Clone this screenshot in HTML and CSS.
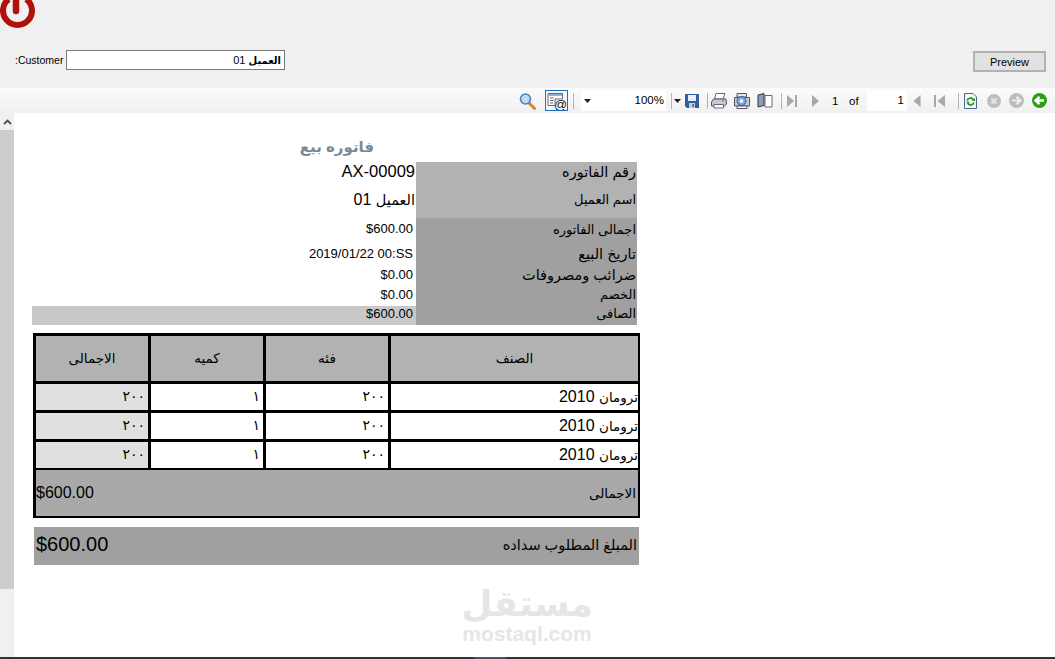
FILE: index.html
```html
<!DOCTYPE html>
<html lang="ar">
<head>
<meta charset="utf-8">
<title>فاتوره بيع</title>
<link rel="stylesheet" href="styles.css">
</head>
<body>
<div class="window">
  <header class="top-panel" dir="ltr">
    <svg class="power" width="36" height="30" viewBox="0 0 36 30"><path d="M8.700 -1 A14.500 14.500 0 1 0 26.300 -1" fill="none" stroke="#b3100a" stroke-width="6"/><path d="M16 -3 V11" stroke="#b3100a" stroke-width="6.500" stroke-linecap="round"/></svg>
    <div class="filter-row">
      <span class="customer-label">:Customer</span>
      <div class="customer-input" dir="rtl"><span class="input-ar">العميل</span> 01</div>
      <button class="preview-btn">Preview</button>
    </div>
  </header>

  <nav class="toolbar" dir="ltr">
    <svg class="t-zoom" width="17" height="18" viewBox="0 0 17 18"><path d="M10 11 L15.500 16.500" stroke="#c98a3a" stroke-width="3" stroke-linecap="round"/><circle cx="6.500" cy="7" r="5" fill="#bcd9f5" stroke="#4a80c0" stroke-width="1.600"/></svg>
    <span class="t-mail-btn"><svg width="21" height="19" viewBox="0 0 21 19"><path d="M2 2.500 H16.500 V8 H9 V14.500 H2 Z" fill="#fff" stroke="#667"/><path d="M2.500 3 H16 V5 H2.500 Z" fill="#8fb0d8"/><path d="M4 7 H7.500 M4 9.500 H7.500 M4 12 H7" stroke="#667"/><text class="at-sign" x="8" y="17.500">@</text></svg></span>
    <i class="sep t-sep1"></i>
    <span class="t-drop"><svg width="7" height="4" viewBox="0 0 7 4"><path d="M0 0 H7 L3.500 4 Z" fill="#222"/></svg></span>
    <span class="t-pct">100%</span>
    <i class="sep t-sep2"></i>
    <svg class="t-arrow" width="7" height="4" viewBox="0 0 7 4"><path d="M0 0 H7 L3.500 4 Z" fill="#222"/></svg>
    <svg class="t-save" width="14" height="14" viewBox="0 0 14 14"><path d="M0 0 H14 V14 H2 L0 12 Z" fill="#2f5f9f"/><path d="M3 1 H11 V7 H3 Z" fill="#e8eef6"/><path d="M4 9 H10 V14 H4 Z" fill="#c4ccd6"/><path d="M7.500 10 H9 V13 H7.500 Z" fill="#2f5f9f"/></svg>
    <i class="sep t-sep3"></i>
    <svg class="t-print" width="16" height="16" viewBox="0 0 16 16"><path d="M5 .5 H14 L12 6 H3.500 Z" fill="#fff" stroke="#667"/><path d="M2.500 6 H15 L15.500 11 L13.500 13 H.5 V9 Z" fill="#c3cbd4" stroke="#556"/><path d="M3 11.500 H12.500 V15 H3 Z" fill="#fff" stroke="#667"/><path d="M11 8 H13" stroke="#3a9a3a"/></svg>
    <svg class="t-setup" width="16" height="16" viewBox="0 0 16 16"><path d="M3 .5 H12.500 V4 H3 Z" fill="#dfe6ee" stroke="#556"/><path d="M.5 4.500 H15.500 V13 H.5 Z" fill="#c3cbd4" stroke="#556"/><circle cx="7.500" cy="8" r="4.500" fill="#7fa5d6" stroke="#2f5f9f"/><circle cx="7.500" cy="8" r="1.800" fill="#fff"/><path d="M3 13 H13 V15.500 H3 Z" fill="#fff" stroke="#556"/></svg>
    <svg class="t-layout" width="16" height="15" viewBox="0 0 16 15"><path d="M1 2 L7 .5 V12.500 L1 14 Z" fill="#8aa0b8" stroke="#334"/><path d="M8 2.500 H15 V14 H8 Z" fill="#fff" stroke="#667"/></svg>
    <i class="sep t-sep4"></i>
    <svg class="t-last" width="10" height="12" viewBox="0 0 10 12"><path d="M0 0 L7 6 L0 12 Z" fill="#a8a8a8"/><path d="M8 0 H10 V12 H8 Z" fill="#a8a8a8"/></svg>
    <svg class="t-next" width="9" height="12" viewBox="0 0 9 12"><path d="M1 0 L8 6 L1 12 Z" fill="#a8a8a8"/></svg>
    <span class="t-num">1</span>
    <span class="t-of">of</span>
    <span class="t-page">1</span>
    <svg class="t-prev" width="8" height="12" viewBox="0 0 8 12"><path d="M7.500 0 L.5 6 L7.500 12 Z" fill="#a8a8a8"/></svg>
    <svg class="t-first" width="11" height="12" viewBox="0 0 11 12"><path d="M0 0 H2 V12 H0 Z" fill="#a8a8a8"/><path d="M11 0 L3.500 6 L11 12 Z" fill="#a8a8a8"/></svg>
    <i class="sep t-sep5"></i>
    <svg class="t-refresh" width="13" height="16" viewBox="0 0 13 16"><path d="M.5 .5 H9 L12.500 4 V15.500 H.5 Z" fill="#f4f8fc" stroke="#48688c"/><path d="M3 7.500 A3.500 3.500 0 0 1 9.500 7 M10 9.500 A3.500 3.500 0 0 1 3.500 10" fill="none" stroke="#2f9a2f" stroke-width="1.800"/><path d="M8 8 H11 V5 Z M2 8.500 H5 V11.500 Z" fill="#2f9a2f"/></svg>
    <svg class="t-stop" width="14" height="14" viewBox="0 0 14 14"><circle cx="7" cy="7" r="7" fill="#bdbdbd"/><path d="M4.500 4.500 L9.500 9.500 M9.500 4.500 L4.500 9.500" stroke="#e6e6e6" stroke-width="2.200"/></svg>
    <svg class="t-fwd" width="15" height="15" viewBox="0 0 15 15"><circle cx="7.500" cy="7.500" r="7.500" fill="#bdbdbd"/><path d="M3 7.500 H10.500 M7.500 3.800 L11.500 7.500 L7.500 11.200" fill="none" stroke="#ececec" stroke-width="2.200"/></svg>
    <svg class="t-back" width="15" height="15" viewBox="0 0 15 15"><circle cx="7.500" cy="7.500" r="7.500" fill="#2c9f10"/><path d="M12 7.500 H4.500 M7.500 3.800 L3.500 7.500 L7.500 11.200" fill="none" stroke="#fff" stroke-width="2.400"/></svg>
  </nav>

  <div class="viewer">
    <aside class="scrollbar">
      <span class="scroll-up"><svg width="9" height="6" viewBox="0 0 9 6"><path d="M1 5 L4.500 1.500 L8 5" fill="none" stroke="#505050" stroke-width="1.800"/></svg></span>
      <span class="scroll-thumb"></span>
    </aside>

    <main class="report">
      <h1 class="report-title" dir="rtl">فاتوره بيع</h1>
      <section class="summary">
        <div class="val big">AX-00009</div><div class="lbl light wide">رقم الفاتوره</div>
        <div class="val big" dir="rtl"><span class="val-ar">العميل</span>&nbsp;01</div><div class="lbl light">اسم العميل</div>
        <div class="val up1">$600.00</div><div class="lbl dark">اجمالى الفاتوره</div>
        <div class="val">2019/01/22 00:SS</div><div class="lbl dark wide">تاريخ البيع</div>
        <div class="val up3">$0.00</div><div class="lbl dark wide up3">ضرائب ومصروفات</div>
        <div class="val up3">$0.00</div><div class="lbl dark up3">الخصم</div>
        <div class="val net up3">$600.00</div><div class="lbl dark up3">الصافى</div>
      </section>

      <section class="items">
        <div class="th">الاجمالى</div><div class="th">كميه</div><div class="th">فئه</div><div class="th">الصنف</div>

        <div class="td shade">٢٠٠</div><div class="td">١</div><div class="td">٢٠٠</div><div class="td name" dir="rtl"><span class="name-ar">ترومان</span>&nbsp;2010</div>
        <div class="td shade">٢٠٠</div><div class="td">١</div><div class="td">٢٠٠</div><div class="td name" dir="rtl"><span class="name-ar">ترومان</span>&nbsp;2010</div>
        <div class="td shade">٢٠٠</div><div class="td">١</div><div class="td">٢٠٠</div><div class="td name" dir="rtl"><span class="name-ar">ترومان</span>&nbsp;2010</div>

        <div class="total"><span class="total-val">$600.00</span><span class="total-lbl">الاجمالى</span></div>
      </section>

      <section class="due">
        <span class="due-val">$600.00</span><span class="due-lbl">المبلغ المطلوب سداده</span>
      </section>
    </main>

    <div class="watermark">
      <span class="wm-ar">مستقل</span>
      <span class="wm-en">mostaql.com</span>
    </div>
  </div>
  <footer class="bottom-edge"><i class="edge-seg"></i></footer>
</div>
</body>
</html>
```
FILE: styles.css
```css
* { box-sizing: border-box; }
html, body { margin: 0; padding: 0; }
body { width: 1055px; height: 659px; overflow: hidden; background: #fff; color: #000; font-family: "Liberation Sans", "DejaVu Sans", sans-serif; }
.window { display: flex; flex-direction: column; height: 659px; }

/* top panel */
.top-panel { height: 88px; background: #f0f0f0; flex: none; }
.power { display: block; }
.filter-row { display: flex; align-items: flex-start; margin-top: 20px; height: 22px; }
.customer-label { margin-left: 15px; width: 51px; font-size: 10.5px; line-height: 20px; }
.customer-input { width: 219px; height: 20px; background: #fff; border: 1px solid #7a7a7a; padding: 0 3px; font-size: 11px; line-height: 18px; text-align: right; }
.input-ar { font-size: 10px; font-weight: bold; }
.preview-btn { margin-left: 688px; margin-top: 1px; width: 73px; height: 21px; background: #e2e2e2; border: 2px solid #b2b2b2; font: 11px "Liberation Sans", sans-serif; color: #000; padding: 1px 0 0; }

/* toolbar */
.toolbar { height: 25px; flex: none; display: flex; align-items: center; background: linear-gradient(#fbfbfb, #f0f0f0); font-size: 11.5px; }
.toolbar > * { flex: none; }
.sep { display: block; width: 1px; height: 16px; background: #b4b4b4; }
.t-zoom { margin-left: 519px; }
.t-mail-btn { margin-left: 9px; width: 23px; height: 21px; border: 1px solid #1f6fb5; background: #f4f8fc; display: flex; align-items: center; justify-content: center; }
.at-sign { font-size: 13px; fill: #222; font-family: "Liberation Sans", sans-serif; }
.t-sep1 { margin-left: 5px; }
.t-drop { margin-left: 7px; width: 13px; height: 21px; background: #fff; display: flex; align-items: center; justify-content: center; }
.t-pct { width: 72px; height: 21px; line-height: 21px; background: #fff; text-align: right; padding-right: 2px; }
.t-sep2 { margin-left: 5px; }
.t-arrow { margin-left: 2px; }
.t-save { margin-left: 4px; }
.t-sep3 { margin-left: 8px; }
.t-print { margin-left: 3px; }
.t-setup { margin-left: 7px; }
.t-layout { margin-left: 7px; }
.t-sep4 { margin-left: 8px; }
.t-last { margin-left: 5px; }
.t-next { margin-left: 14px; }
.t-num { margin-left: 12px; width: 6px; }
.t-of { margin-left: 11px; width: 10px; }
.t-page { margin-left: 8px; width: 40px; height: 21px; line-height: 21px; background: #fff; text-align: right; padding-right: 3px; }
.t-prev { margin-left: 6px; }
.t-first { margin-left: 13px; }
.t-sep5 { margin-left: 13px; }
.t-refresh { margin-left: 5px; }
.t-stop { margin-left: 10px; }
.t-fwd { margin-left: 8px; }
.t-back { margin-left: 8px; }

/* viewer */
.viewer { position: relative; flex: 1; min-height: 0; display: flex; background: #fff; }
.scrollbar { width: 14px; background: #f0f0f0; display: flex; flex-direction: column; flex: none; }
.scroll-up { height: 17px; display: flex; align-items: center; justify-content: center; }
.scroll-thumb { height: 459px; background: #cdcdcd; }
.report { margin-left: 18px; width: 608px; }

.report-title { margin: 0; height: 49px; padding: 22px 266px 0 0; font-size: 15px; line-height: 24px; font-weight: bold; color: #778899; text-align: right; }

.summary { display: grid; width: 605px; grid-template-columns: 384px 221px; grid-template-rows: 19px 37px 22px 27px 19px 20px 19px; }
.val { display: flex; align-items: center; justify-content: flex-end; padding-right: 3px; font-size: 13px; color: #000; }
.val.big { font-size: 16.5px; padding-right: 1px; }
.val.big[dir="rtl"] { justify-content: flex-start; font-size: 16px; }
.val-ar { font-size: 14.5px; }
.val.net { background: #c8c8c8; }
.lbl { padding-right: 1px; text-align: right; font-size: 13px; direction: rtl; display: flex; align-items: center; justify-content: flex-start; }
.lbl.wide { font-size: 14.5px; }
.up1 { padding-bottom: 2px; }
.up3 { padding-bottom: 4px; }
.light { background: #b2b2b2; }
.dark { background: #a0a0a0; }

.items { display: grid; margin: 8px 0 0 1px; width: 607px; padding: 3px 2px 2px 3px; gap: 3px; background: #000; grid-template-columns: 112px 112px 122px 247px; grid-template-rows: 45px 26px 26px 26px 45px; }
.th { background: #b2b2b2; display: flex; align-items: center; justify-content: center; padding-bottom: 2px; font-size: 13.5px; }
.td { background: #fff; display: flex; align-items: center; justify-content: flex-end; padding: 0 3px 2px 0; font-size: 14px; }
.td.shade { background: #e0e0e0; }
.td.name { justify-content: flex-start; padding: 0 0 1px 0; font-size: 16px; }
.name-ar { font-size: 13.5px; }
.total { grid-column: 1 / -1; margin-top: -1px; background: #a9a9a9; display: flex; align-items: center; justify-content: space-between; padding: 0 2px 1px 0; }
.total-val { font-size: 16px; }
.total-lbl { font-size: 13.5px; direction: rtl; }

.due { margin: 9px 0 0 2px; width: 605px; height: 38px; background: #a0a0a0; display: flex; align-items: center; justify-content: space-between; padding: 0 2px 3px 2px; }
.due-val { font-size: 20px; }
.due-lbl { font-size: 14.5px; direction: rtl; }

.watermark { position: absolute; left: 440px; top: 472px; width: 174px; display: flex; flex-direction: column; align-items: center; color: #e6e6e6; font-weight: bold; pointer-events: none; }
.wm-ar { font-size: 36px; line-height: 38px; direction: rtl; }
.wm-en { font-size: 21px; line-height: 22px; }

.bottom-edge { height: 2px; flex: none; background: #333; display: flex; }
.edge-seg { display: block; margin-left: 474px; width: 32px; height: 2px; background: #4a5060; }
```
